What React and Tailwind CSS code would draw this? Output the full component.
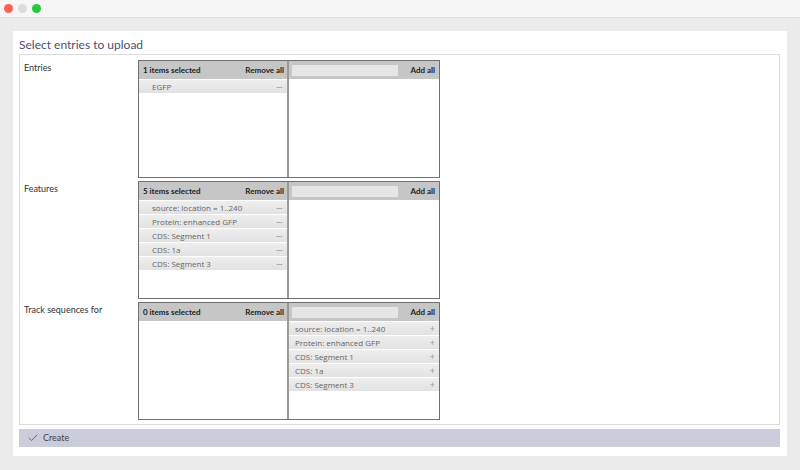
import { Check } from 'lucide-react';

const features = [
  'source: location = 1..240',
  'Protein: enhanced GFP',
  'CDS: Segment 1',
  'CDS: 1a',
  'CDS: Segment 3',
];

// one item row inside a list pane
const Item = ({ label, sign, inset }) => (
  <div className={`flex items-center justify-between h-[13px] mb-px bg-gradient-to-b from-[#eeeeee] to-[#e2e2e2] pr-[4px] ${inset}`}>
    <span className="text-[8px] text-[#666] leading-none" style={{ fontFamily: '"Open Sans", sans-serif' }}>{label}</span>
    <span className="text-[9px] text-[#9a9a9a] leading-none">{sign}</span>
  </div>
);

const DualList = ({ selected, available }) => (
  <div className="flex w-[302px] h-[118px] border border-[#707070]">
    {/* chosen side */}
    <div className="w-[150px] flex flex-col border-r-2 border-[#9a9a9a]">
      <div className="flex items-center justify-between h-[18px] bg-[#c6c6c6] pl-[4px] pr-[3px]">
        <span className="text-[8px] font-bold text-[#222]">{selected.length} items selected</span>
        <span className="text-[8px] font-bold text-[#222]">Remove all</span>
      </div>
      <div className="pt-px">
        {selected.map((s) => (
          <Item key={s} label={s} sign="—" inset="pl-[13px]" />
        ))}
      </div>
    </div>
    {/* available side */}
    <div className="flex-1 flex flex-col">
      <div className="flex items-center justify-between h-[18px] bg-[#c6c6c6] pl-[3px] pr-[4px]">
        <div className="w-[106px] h-[11px] bg-[#e6e6e6]" />
        <span className="text-[8px] font-bold text-[#222]">Add all</span>
      </div>
      <div className="pt-px">
        {available.map((s) => (
          <Item key={s} label={s} sign="+" inset="pl-[6px]" />
        ))}
      </div>
    </div>
  </div>
);

const Row = ({ label, children }) => (
  <div className="flex">
    <div className="w-[118px] pl-[4px] pt-[1px] text-[9px] text-[#333]">{label}</div>
    {children}
  </div>
);

export default function App() {
  return (
    <div className="w-[800px] h-[470px] bg-[#ececec] flex flex-col" style={{ fontFamily: 'Lato, "Open Sans", sans-serif' }}>
      {/* window chrome */}
      <div className="h-[18px] bg-[#f6f6f6] border-b border-[#dedede] flex items-center gap-[5px] pl-[4px]">
        <span className="w-[9px] h-[9px] rounded-full bg-[#fe5f57]" />
        <span className="w-[9px] h-[9px] rounded-full bg-[#dcdcdc]" />
        <span className="w-[9px] h-[9px] rounded-full bg-[#2ac840]" />
      </div>

      <div className="px-[13px] pt-[13px]">
        <div className="bg-white h-[425px] pl-[6px] pr-[7px] pt-[5px] flex flex-col">
          <h1 className="text-[12px] text-[#4b5070] leading-[17px] mb-[1px]">Select entries to upload</h1>
          <div className="h-[371px] border border-[#dcdcdc] pt-[5px] flex flex-col gap-[3px]">
            <Row label="Entries">
              <DualList selected={['EGFP']} available={[]} />
            </Row>
            <Row label="Features">
              <DualList selected={features} available={[]} />
            </Row>
            <Row label="Track sequences for">
              <DualList selected={[]} available={features} />
            </Row>
          </div>
          <div className="mt-[4px] h-[18px] bg-[#cbccd9] flex items-center pl-[8px] gap-[4px]">
            <Check size={12} strokeWidth={1.5} className="text-[#4a4a4a]" />
            <span className="text-[9px] text-[#444]">Create</span>
          </div>
        </div>
      </div>
    </div>
  );
}
